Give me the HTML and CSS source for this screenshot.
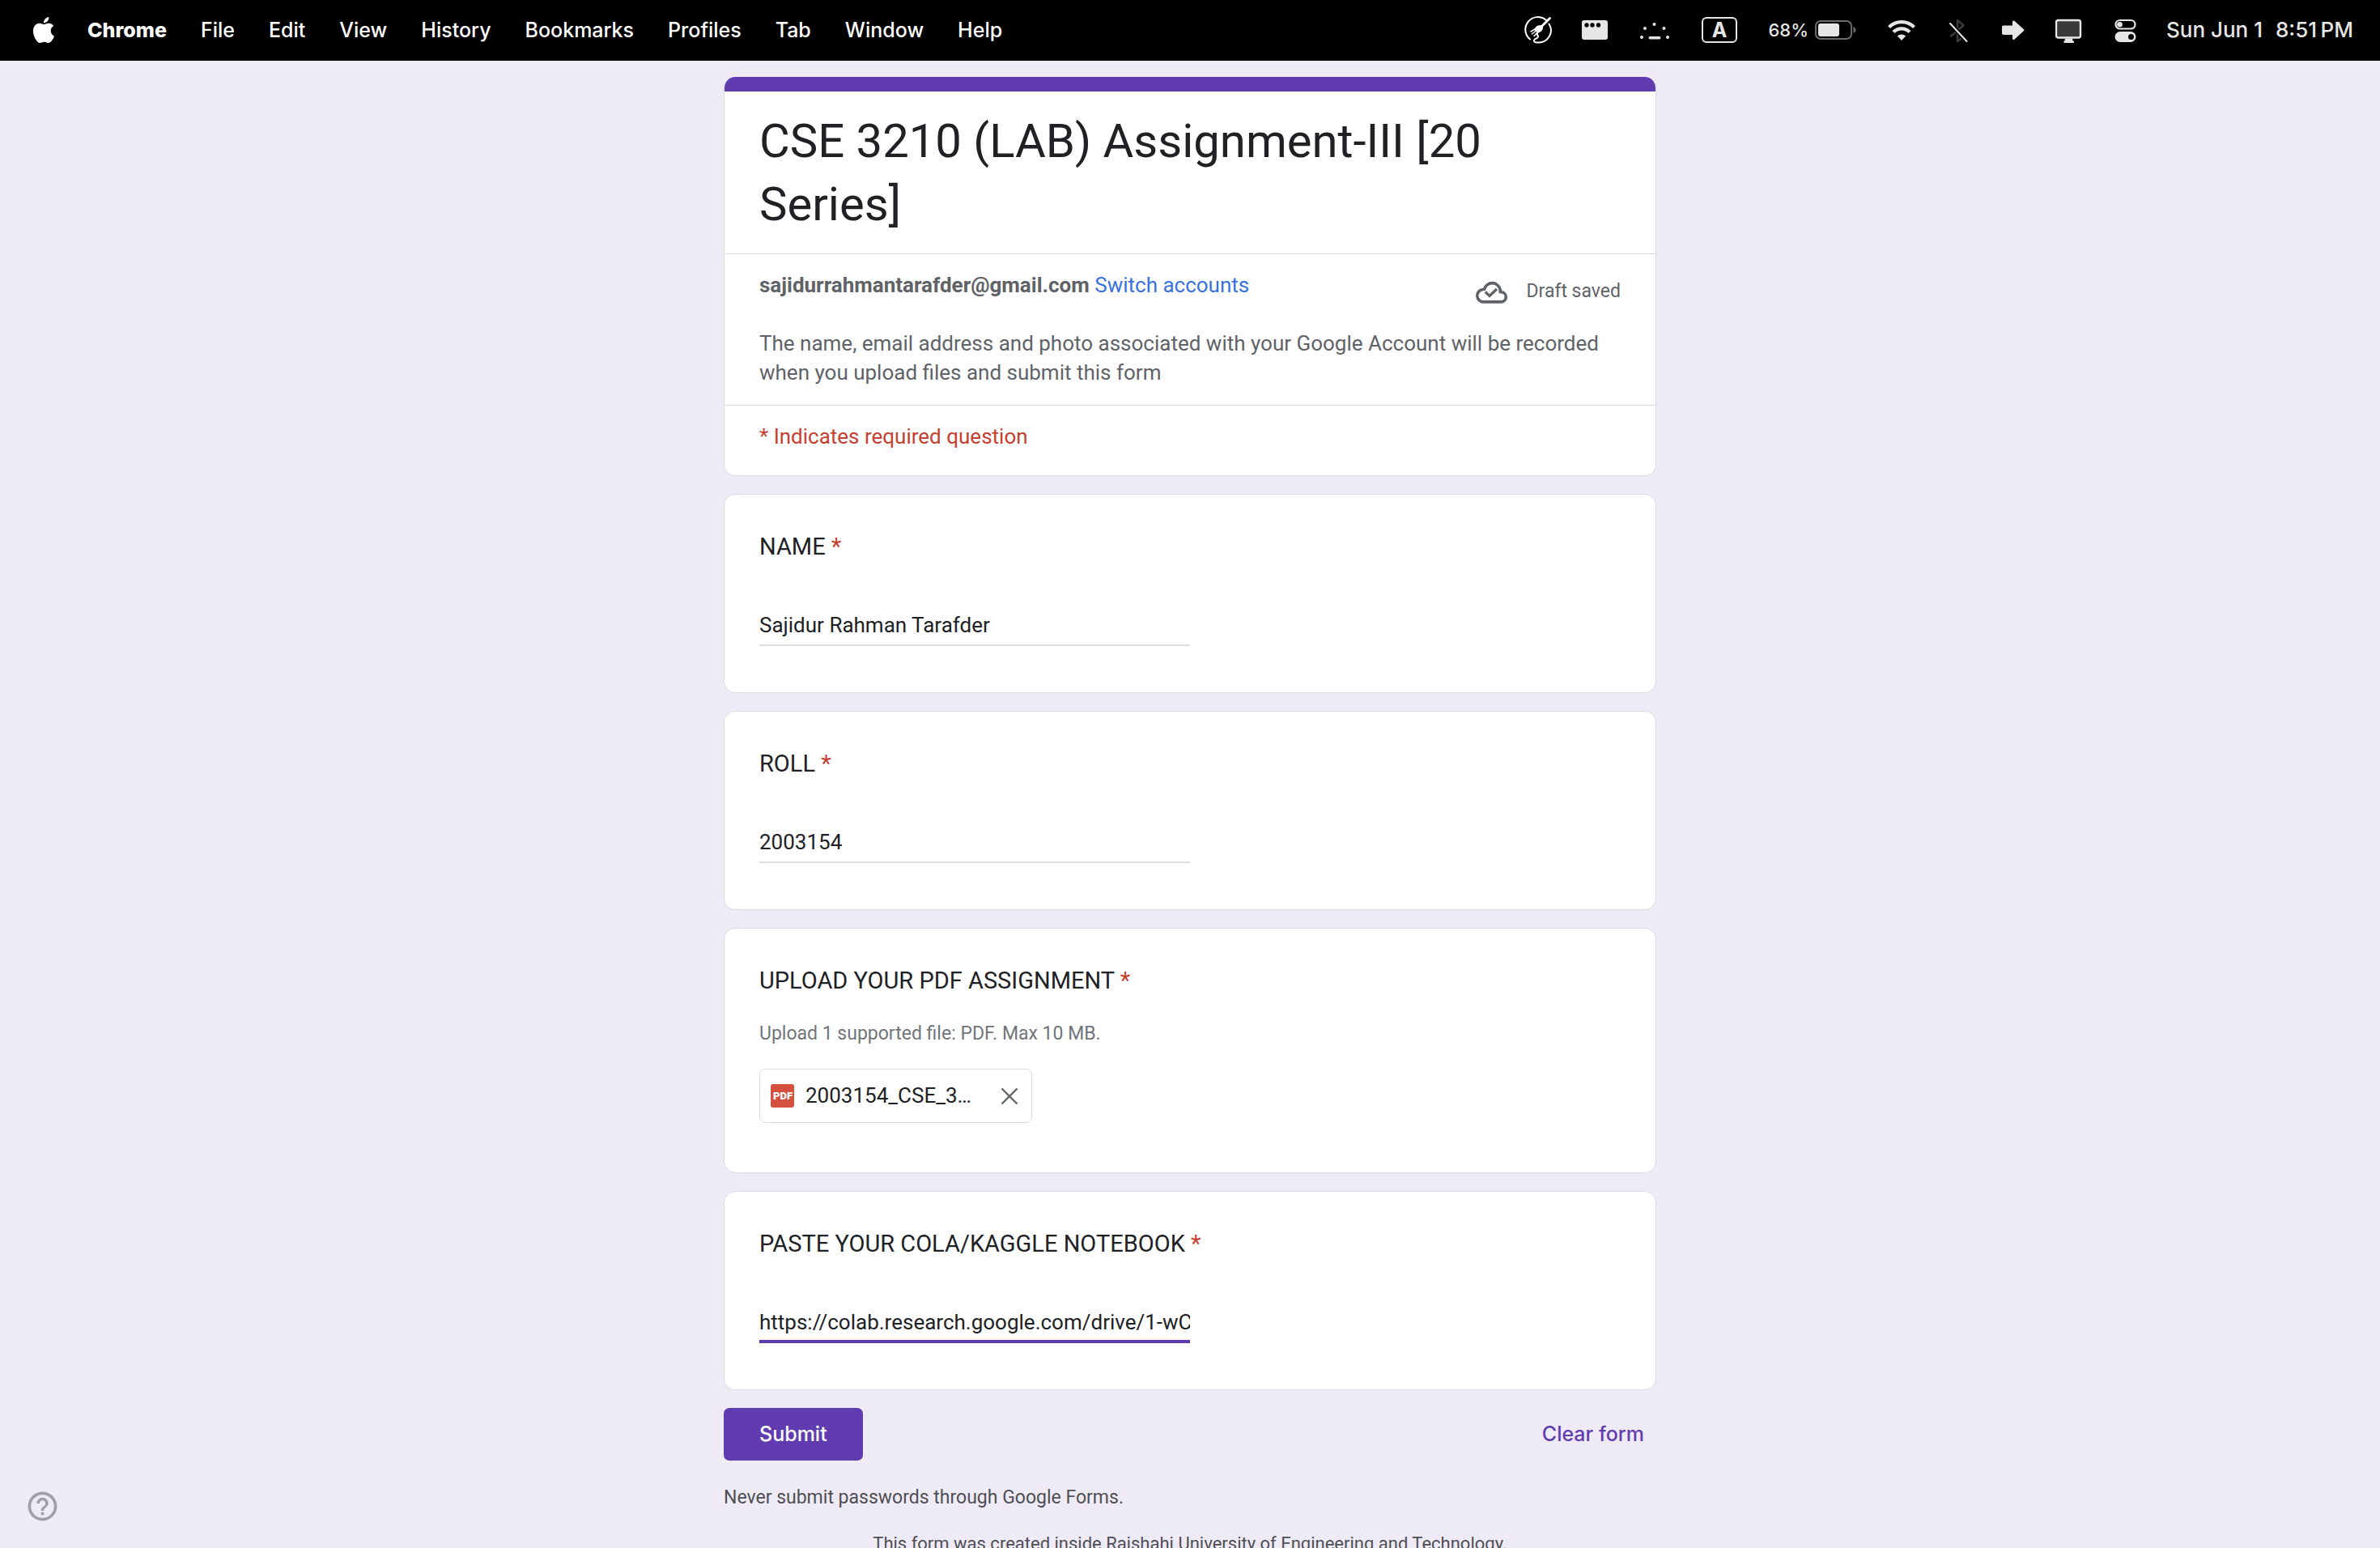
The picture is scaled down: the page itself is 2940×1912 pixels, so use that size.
FILE: index.html
```html
<!DOCTYPE html>
<html lang="en">
<head>
<meta charset="utf-8">
<title>CSE 3210 (LAB) Assignment-III [20 Series]</title>
<link rel="stylesheet" href="styles.css">
</head>
<body>
<header class="menubar">
  <nav class="menus" aria-label="Application menu">
    <button class="menu apple" aria-label="Apple">
      <svg width="32" height="32" viewBox="0 0 24 24" fill="currentColor"><path d="M12.152 6.896c-.948 0-2.415-1.078-3.96-1.04-2.04.027-3.91 1.183-4.961 3.014-2.117 3.675-.546 9.103 1.519 12.09 1.013 1.454 2.208 3.09 3.792 3.039 1.52-.065 2.09-.987 3.935-.987 1.831 0 2.35.987 3.96.948 1.637-.026 2.676-1.48 3.676-2.948 1.156-1.688 1.636-3.325 1.662-3.415-.039-.013-3.182-1.221-3.22-4.857-.026-3.04 2.48-4.494 2.597-4.559-1.429-2.09-3.623-2.324-4.39-2.376-2-.156-3.675 1.09-4.61 1.09zM15.53 3.83c.843-1.012 1.4-2.427 1.245-3.83-1.207.052-2.662.805-3.532 1.818-.78.896-1.454 2.338-1.273 3.714 1.338.104 2.715-.688 3.559-1.701"/></svg>
    </button>
    <button class="menu app-name">Chrome</button>
    <button class="menu">File</button>
    <button class="menu">Edit</button>
    <button class="menu">View</button>
    <button class="menu">History</button>
    <button class="menu">Bookmarks</button>
    <button class="menu">Profiles</button>
    <button class="menu">Tab</button>
    <button class="menu">Window</button>
    <button class="menu">Help</button>
  </nav>
  <div class="status">
    <svg width="36" height="36" viewBox="0 0 36 36" fill="none" stroke="#fff" stroke-width="2" stroke-linecap="round">
      <path d="M8 29.500A15 15 0 0 1 27.500 5.500M31.500 10.500A15 15 0 0 1 18 33.500c-4 .5-6-1.500-4.500-3.500 1-1.500 4-1.500 4.500-3.500.3-1.500-1.500-2-1-3.500"/>
      <path d="M32.500 3.500 22 14" stroke-width="3"/>
      <path d="M24 13.500c.5 3-1 5.500-3.500 7l-3 1.500-4.500-4.500 2-3c2-2.500 5-2.500 7.500-2z" fill="#fff" stroke="none"/>
      <path d="m15 16.500-6 3.500M16 18.500l-5.500 4.500M18 20l-5 5.500" stroke-width="1.500"/>
    </svg>
    <svg width="34" height="36" viewBox="0 0 34 36"><rect x="0" y="6" width="32" height="24" rx="3" fill="#e6e6e6"/><g fill="#000"><circle cx="6" cy="12" r="2.700"/><circle cx="13" cy="12" r="2.700"/><circle cx="20.500" cy="12" r="2.700"/></g></svg>
    <svg width="40" height="36" viewBox="0 0 40 36" fill="#e6e6e6"><circle cx="8" cy="16" r="2"/><circle cx="19.500" cy="11" r="2"/><circle cx="31.500" cy="16" r="2"/><circle cx="4" cy="27" r="2"/><circle cx="36" cy="27" r="2"/><rect x="12.500" y="26" width="15" height="3.500" rx="1.700"/></svg>
    <svg width="48" height="36" viewBox="0 0 48 36"><rect x="3" y="3" width="42" height="30" rx="5" fill="none" stroke="#e6e6e6" stroke-width="2"/><text x="24" y="27" text-anchor="middle" class="input-source">A</text></svg>
    <div class="battery">
      <span>68%</span>
      <svg width="51" height="36" viewBox="0 0 51 36"><rect x="1" y="7" width="44" height="22" rx="6" fill="none" stroke="#6b6b6b" stroke-width="2"/><rect x="4" y="10" width="26" height="16" rx="3" fill="#e6e6e6"/><path d="M47.500 14c4 1.500 4 6.500 0 8z" fill="#6b6b6b"/></svg>
    </div>
    <svg width="40" height="36" viewBox="0 0 40 36" fill="none" stroke="#e6e6e6" stroke-width="4.200"><path d="M4.500 14.500a22 22 0 0 1 31 0"/><path d="M10 20.500a14.200 14.200 0 0 1 20 0"/><path d="M14.800 25.500a7.500 7.500 0 0 1 10.400 0L20 31z" fill="#e6e6e6" stroke="none"/></svg>
    <svg width="30" height="36" viewBox="0 0 30 36" fill="none" stroke-linecap="round"><path d="m5 25.500 15.500-13L13 6v26l7.500-5.500L5 13" stroke="#3a3a3a" stroke-width="2.600" stroke-linejoin="round"/><path d="m4.500 10 20 22" stroke="#000" stroke-width="5"/><path d="m4 10 20.500 22" stroke="#e6e6e6" stroke-width="2"/></svg>
    <svg width="32" height="36" viewBox="0 0 32 36" fill="#e6e6e6"><path d="M4 12.500h11V8c0-1.500 1.500-2 2.600-1l11.400 10.200c.6.600.6 1.200 0 1.800L17.600 29.500c-1.100 1-2.600.5-2.600-1V24H4c-1.200 0-2-.8-2-2v-7.500c0-1.200.8-2 2-2z"/></svg>
    <svg width="35" height="36" viewBox="0 0 35 36"><rect x="1" y="6" width="30" height="21.500" rx="2.500" fill="#3a3a3a" stroke="#e6e6e6" stroke-width="2.400"/><path d="M12 28.500h9l.5 3h.8c1 0 1 2.500 0 2.500H11c-1 0-1-2.500 0-2.500h.5z" fill="#e6e6e6"/></svg>
    <svg width="30" height="36" viewBox="0 0 30 36"><rect x="3.500" y="6" width="24" height="10.500" rx="5.200" fill="none" stroke="#e6e6e6" stroke-width="2.200"/><circle cx="8.500" cy="11.200" r="3.300" fill="#e6e6e6"/><rect x="2.500" y="20" width="26" height="13" rx="6.500" fill="#e6e6e6"/><circle cx="22.500" cy="26.500" r="3.500" fill="#000"/></svg>
    <div class="clock"><span>Sun Jun 1</span><span>8:51&#8201;PM</span></div>
  </div>
</header>

<main class="page">
  <form class="form">
    <section class="card intro">
      <h1 class="title">CSE 3210 (LAB) Assignment-III [20 Series]</h1>
      <div class="account">
        <div class="account-row">
          <p class="body-text"><strong>sajidurrahmantarafder@gmail.com</strong> <a class="link" href="#">Switch accounts</a></p>
          <div class="draft">
            <svg width="43" height="43" viewBox="0 0 43 43" fill="none" stroke="currentColor" stroke-width="3.600"><path d="M11.200 34.900A7.700 7.700 0 0 1 9.800 19.500l1.800-.3a10 10 0 0 1 19.600 1v2.600H33a6.100 6.100 0 0 1 0 12.100z" stroke-linejoin="round"/><path d="m12.800 22.500 5.200 5 9-8.500" stroke-width="3.200"/></svg>
            <span>Draft saved</span>
          </div>
        </div>
        <p class="body-text">The name, email address and photo associated with your Google Account will be recorded when you upload files and submit this form</p>
      </div>
      <p class="body-text required-note">* Indicates required question</p>
    </section>

    <section class="card question">
      <label class="prompt" for="name">NAME <span class="star">*</span></label>
      <input class="answer" id="name" type="text" value="Sajidur Rahman Tarafder">
    </section>

    <section class="card question">
      <label class="prompt" for="roll">ROLL <span class="star">*</span></label>
      <input class="answer" id="roll" type="text" value="2003154">
    </section>

    <section class="card upload">
      <h2 class="prompt">UPLOAD YOUR PDF ASSIGNMENT <span class="star">*</span></h2>
      <p class="hint">Upload 1 supported file: PDF. Max 10 MB.</p>
      <div class="file">
        <svg width="29" height="29" viewBox="0 0 29 29"><rect width="29" height="29" rx="3" fill="#d6503f"/><text x="15" y="19" text-anchor="middle" class="pdf-mark">PDF</text></svg>
        <span class="file-name">2003154_CSE_3…</span>
        <button class="remove" type="button" aria-label="Remove file"><svg width="22" height="22" viewBox="0 0 22 22" stroke="currentColor" stroke-width="2.400"><path d="m1.500 1.500 19 19M20.500 1.500l-19 19"/></svg></button>
      </div>
    </section>

    <section class="card question">
      <label class="prompt" for="notebook">PASTE YOUR COLA/KAGGLE NOTEBOOK <span class="star">*</span></label>
      <input class="answer active" id="notebook" type="text" value="https://colab.research.google.com/drive/1-wC">
    </section>

    <div class="actions">
      <button class="submit" type="submit">Submit</button>
      <button class="clear" type="reset">Clear form</button>
    </div>
    <p class="notice">Never submit passwords through Google Forms.</p>
    <p class="notice origin">This form was created inside Rajshahi University of Engineering and Technology.</p>
  </form>
</main>

<button class="help" type="button" aria-label="Help and feedback">
  <svg width="43" height="43" viewBox="0 0 24 24" fill="currentColor"><path d="M11 18h2v-2h-2v2zm1-16C6.480 2 2 6.480 2 12s4.480 10 10 10 10-4.480 10-10S17.520 2 12 2zm0 18c-4.410 0-8-3.590-8-8s3.590-8 8-8 8 3.590 8 8-3.590 8-8 8zm0-14c-2.210 0-4 1.790-4 4h2c0-1.100.9-2 2-2s2 .9 2 2c0 2-3 1.750-3 5h2c0-2.250 3-2.500 3-5 0-2.210-1.790-4-4-4z"/></svg>
</button>
</body>
</html>
```

FILE: styles.css
```css
:root {
  --purple: #613cb0;
  --page: #eeebf6;
  --ink: #202124;
  --muted: #5f6368;
  --red: #c5402f;
  --line: #dadce0;
}

* {
  box-sizing: border-box;
}

body {
  margin: 0;
  height: 100vh;
  display: flex;
  flex-direction: column;
  background: var(--page);
  color: var(--ink);
  font-family: Roboto, "Liberation Sans", sans-serif;
  font-size: 26px;
  line-height: 36px;
}

button {
  padding: 0;
  border: 0;
  background: none;
  color: inherit;
  font: inherit;
}

svg {
  display: block;
  flex: none;
}

h1, h2, p {
  margin: 0;
  font-weight: 400;
}

/* System menu bar */
.menubar {
  flex: none;
  display: flex;
  justify-content: space-between;
  align-items: center;
  height: 75px;
  padding: 0 33px 2px 38px;
  background: #000;
  color: #fff;
  font-family: Inter, "Liberation Sans", sans-serif;
  font-size: 25px;
  font-weight: 500;
}

.menus {
  display: flex;
  align-items: center;
  gap: 42px;
}

.apple {
  margin-right: -4px;
}

.app-name {
  font-weight: 800;
}

.status {
  display: flex;
  align-items: center;
  gap: 36px;
  color: #e6e6e6;
}

.input-source {
  fill: #e6e6e6;
  font-size: 25px;
  font-weight: 700;
}

.battery {
  display: flex;
  align-items: center;
  gap: 8px;
  font-size: 22px;
}

.clock {
  display: flex;
  gap: 16px;
  font-size: 26px;
}

/* Form */
.page {
  flex: 1;
  min-height: 0;
  overflow-y: auto;
  scrollbar-width: none;
  padding: 20px 24px;
}

.form {
  display: flex;
  flex-direction: column;
  gap: 22px;
  max-width: 1152px;
  margin: 0 auto;
}

.card {
  border: 1px solid var(--line);
  border-radius: 14px;
  background: #fff;
}

.intro {
  border-top: 0;
  overflow: hidden;
}

.intro::before {
  content: "";
  display: block;
  height: 18px;
  margin: 0 -1px;
  background: var(--purple);
}

.title {
  padding: 22px 43px;
  font-size: 58px;
  line-height: 78px;
}

.account {
  padding: 20px 43px 22px;
  border: solid var(--line);
  border-width: 1px 0;
  color: var(--muted);
}

.account-row {
  display: flex;
  justify-content: space-between;
  align-items: flex-start;
  margin-bottom: 25px;
}

.link {
  color: #3871e0;
  text-decoration: none;
}

.draft {
  display: flex;
  align-items: center;
  gap: 20px;
  padding-top: 4px;
  font-size: 23px;
}

.required-note {
  padding: 20px 43px 30px;
  color: var(--red);
}

.question {
  display: flex;
  flex-direction: column;
  align-items: flex-start;
  gap: 53px;
  padding: 42px 43px 57px;
}

.prompt {
  font-size: 29px;
  line-height: 44px;
}

.star {
  color: var(--red);
}

.answer {
  width: 50%;
  height: 48px;
  padding: 0 0 2px;
  border: 0;
  border-bottom: 2px solid #dedede;
  outline: 0;
  background: none;
  color: var(--ink);
  font: inherit;
}

.answer.active {
  padding-bottom: 0;
  border-bottom: 4px solid var(--purple);
}

.upload {
  padding: 42px 43px 61px;
}

.hint {
  margin: 28px 0 27px;
  color: #70757a;
  font-size: 23px;
  line-height: 32px;
}

.file {
  display: flex;
  align-items: center;
  width: 337px;
  height: 67px;
  padding: 0 16px 0 13px;
  border: 1px solid var(--line);
  border-radius: 7px;
}

.pdf-mark {
  fill: #fff;
  font-size: 13px;
  font-weight: 900;
}

.file-name {
  flex: 1;
  padding: 0 0 2px 14px;
  white-space: nowrap;
}

.remove {
  color: var(--muted);
}

.actions {
  display: flex;
  justify-content: space-between;
  align-items: center;
  font-family: Inter, Roboto, sans-serif;
  font-size: 25px;
  font-weight: 500;
}

.submit {
  height: 65px;
  padding: 0 44px 2px;
  border-radius: 7px;
  background: var(--purple);
  color: #fff;
}

.clear {
  padding: 0 15px 2px;
  color: var(--purple);
}

.notice {
  padding-top: 8px;
  color: #4f4f54;
  font-size: 23px;
  line-height: 32px;
}

.origin {
  padding-top: 3px;
  font-size: 22px;
  text-align: center;
}

/* Floating help button */
.help {
  position: fixed;
  left: 31px;
  bottom: 30px;
  color: #a19fa8;
}
```
